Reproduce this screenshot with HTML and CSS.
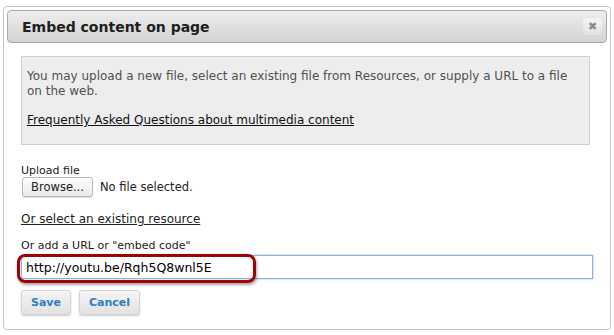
FILE: index.html
```html
<!DOCTYPE html>
<html lang="en">
  <head>
    <meta charset="UTF-8" />
    <title>Embed content on page</title>
    <link rel="stylesheet" href="styles.css">
  </head>
  <body>
    <div class="dialog">
      <div class="dialog-header">
        <h1>Embed content on page</h1>
        <button class="close" title="Close">&#10006;</button>
      </div>
      <div class="dialog-body">
        <div class="intro">
          <p>You may upload a new file, select an existing file from Resources, or supply a URL to a file on the web.</p>
          <p><a href="#" class="faq">Frequently Asked Questions about multimedia content</a></p>
        </div>

        <div class="upload">
          <label>Upload file</label>
          <div class="file-row">
            <span class="browse">Browse...</span>
            <span class="file-name">No file selected.</span>
          </div>
        </div>

        <a href="#" class="existing">Or select an existing resource</a>

        <div class="url-group">
          <label for="url">Or add a URL or "embed code"</label>
          <div class="url-field">
            <input type="text" id="url" value="http://youtu.be/Rqh5Q8wnl5E" />
            <!-- annotation drawn over the field -->
            <div class="highlight"></div>
          </div>
        </div>

        <div class="actions">
          <button class="btn">Save</button>
          <button class="btn">Cancel</button>
        </div>
      </div>
    </div>
  </body>
</html>
```

FILE: styles.css
```css
body {
  margin: 0;
  background-color: #fff;
  font-family: "DejaVu Sans", Verdana, sans-serif;
}
.dialog {
  box-sizing: border-box;
  width: 608px;
  height: 324px;
  margin: 6px 0 0 3px;
  padding: 3px;
  border: 1px solid #c4c4c4;
  border-radius: 4px;
  background-color: #fff;
}
.dialog-header {
  box-sizing: border-box;
  height: 33px;
  display: flex;
  align-items: center;
  justify-content: space-between;
  padding: 0 4px 0 14px;
  border: 1px solid #ababab;
  border-radius: 4px;
  background: linear-gradient(#ededed, #d3d3d3);
}
.dialog-header h1 {
  margin: 0;
  font-size: 14px;
  font-weight: bold;
  color: #1e1e1e;
}
.close {
  width: 19px;
  height: 17px;
  padding: 0;
  border: none;
  border-radius: 3px;
  background: linear-gradient(#f4f4f4, #e2e2e2);
  color: #8a8a8a;
  font-size: 11px;
  line-height: 17px;
  font-family: "DejaVu Sans", sans-serif;
}
.dialog-body {
  padding: 13px 17px 0 14px;
}
.intro {
  padding: 12px 12px 16px 5px;
  border: 1px solid #cfcfcf;
  background-color: #ededed;
  font-size: 12px;
  line-height: 15px;
  color: #505050;
}
.intro p {
  margin: 0 0 14px;
}
.intro p:last-child {
  margin-bottom: 0;
}
.faq {
  color: #111;
}
.upload {
  margin-top: 19px;
}
label {
  display: block;
  font-size: 11px;
  line-height: 13px;
  color: #1a1a1a;
}
.file-row {
  display: flex;
  align-items: center;
  gap: 7px;
}
.browse {
  box-sizing: border-box;
  width: 71px;
  height: 20px;
  margin-left: 1px;
  border: 1px solid #b9b9b9;
  border-radius: 3px;
  background: linear-gradient(#fdfdfd, #e9e9e9);
  box-shadow: 0 1px 1px rgba(0, 0, 0, 0.15);
  font-size: 11.5px;
  line-height: 18px;
  text-align: center;
  color: #222;
}
.file-name {
  font-size: 11.5px;
  color: #222;
}
.existing {
  display: block;
  margin-top: 15px;
  font-size: 12px;
  line-height: 14px;
  color: #222;
}
.url-group {
  margin-top: 13px;
}
.url-field {
  position: relative;
  margin-top: 3px;
}
.url-field input {
  box-sizing: border-box;
  width: 572px;
  height: 24px;
  margin: 0;
  padding: 0 4px;
  border: 1px solid #8cb2de;
  box-shadow: 0 0 2px #8db6e6;
  font-family: "DejaVu Sans", sans-serif;
  font-size: 12.5px;
  color: #000;
  outline: none;
}
.highlight {
  position: absolute;
  left: -4px;
  top: -1px;
  width: 239px;
  height: 29px;
  box-sizing: border-box;
  border: 3px solid #a30000;
  border-radius: 8px;
  box-shadow: 1px 2px 3px rgba(0, 0, 0, 0.35);
}
.actions {
  display: flex;
  gap: 8px;
  margin-top: 11px;
}
.btn {
  height: 25px;
  padding: 0 9px;
  border: 1px solid #d4d4d4;
  border-radius: 3px;
  background: linear-gradient(#f5f5f5, #e1e1e1);
  box-shadow: 0 1px 2px rgba(0, 0, 0, 0.2);
  font-family: "DejaVu Sans", sans-serif;
  font-size: 11px;
  font-weight: bold;
  color: #2d7dc0;
}
```
